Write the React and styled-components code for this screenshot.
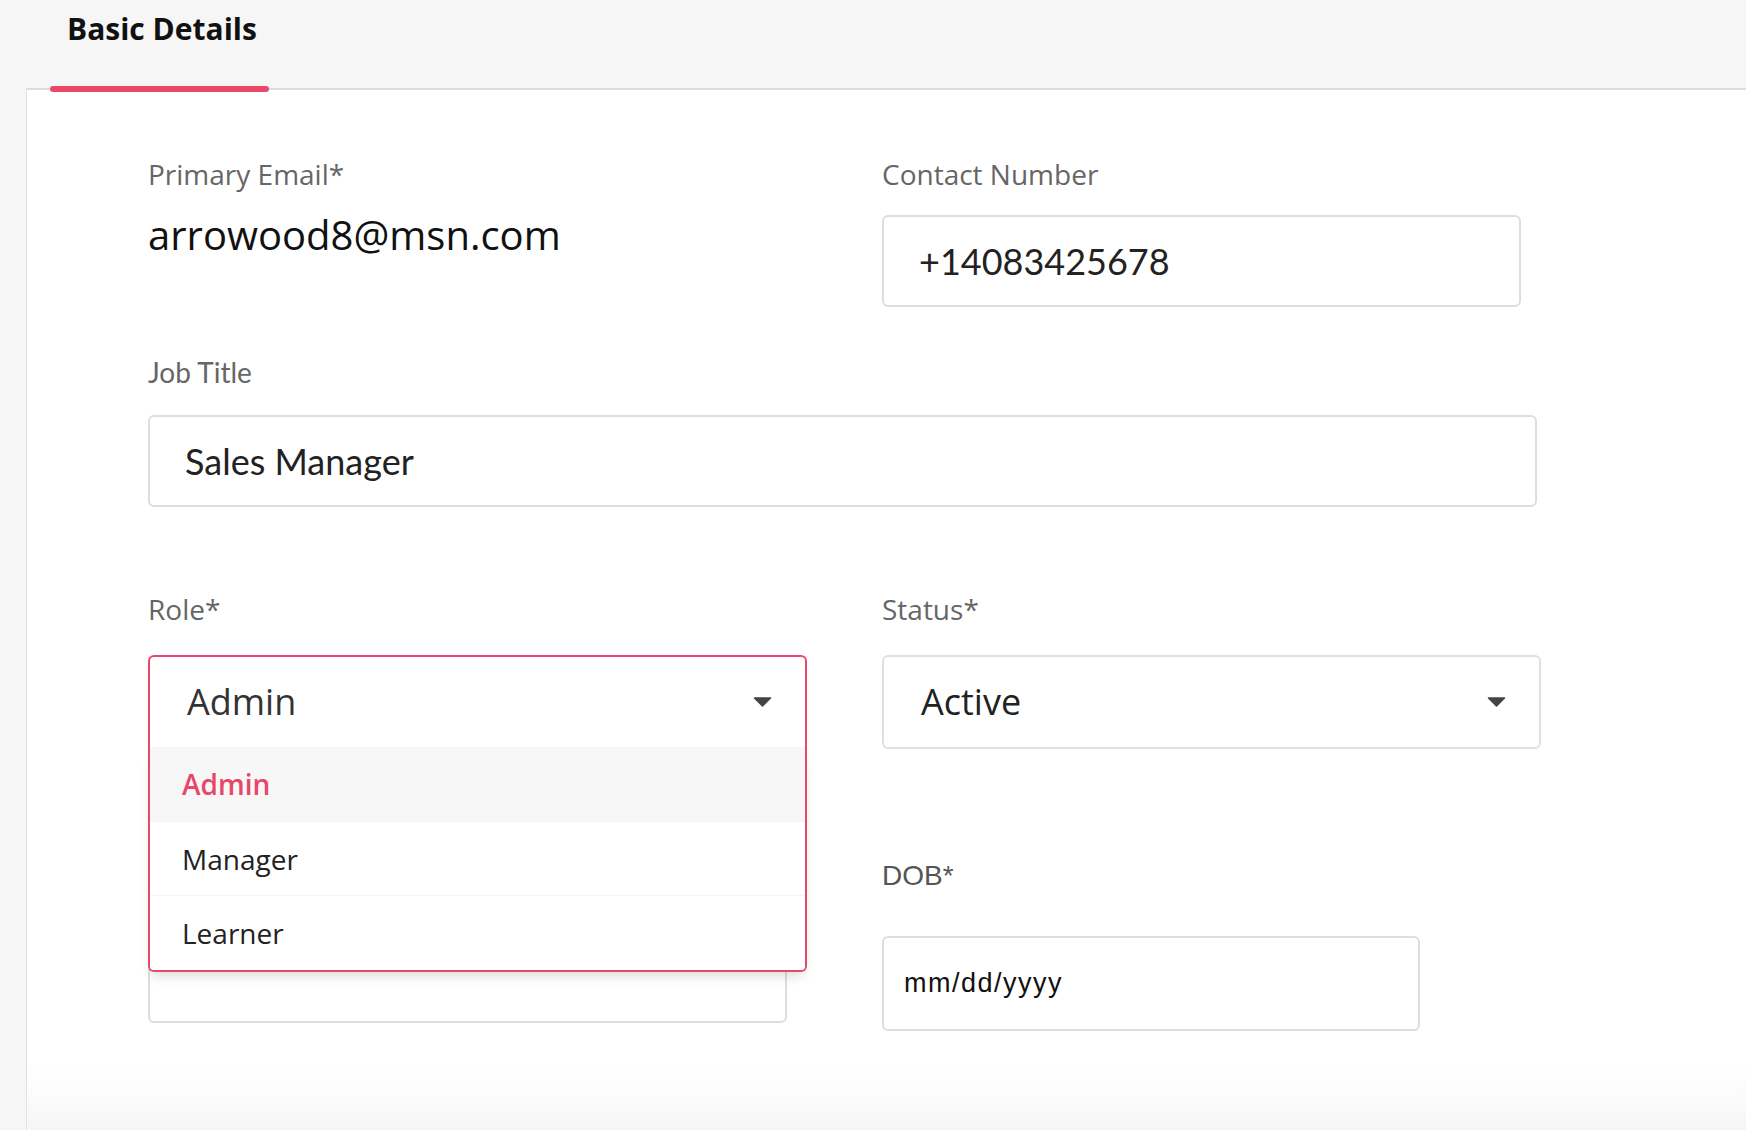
import React from 'react'
import styled, { createGlobalStyle } from 'styled-components';

const GlobalStyle = createGlobalStyle`
    body {
        margin: 0;
        background: #f6f6f6;
        font-family: "Open Sans", "Liberation Sans", sans-serif;
    }
`

const Page = styled.div`
    min-height: 1130px;
    display: flex;
    flex-direction: column;
    padding-left: 26px;
    box-sizing: border-box;
`

const TabBar = styled.div`
    height: 88px;
    display: flex;
    padding-left: 24px;
`

const Tab = styled.div`
    position: relative;
    width: 219px;
    box-sizing: border-box;
    padding: 14px 0 0 17px;
    font-size: 30px;
    line-height: 30px;
    font-weight: 700;
    color: #111;

    &::after {
        content: '';
        display: ${props => props.$active ? 'block' : 'none'};
        position: absolute;
        left: 0;
        right: 0;
        bottom: -4px;
        height: 6px;
        border-radius: 3px;
        background: #ec4669;
        z-index: 2;
    }
`

const Card = styled.div`
    flex: 1;
    background: #fff;
    border-top: 2px solid #dcdcdc;
    border-left: 1px solid #e2e2e2;
    padding: 70px 0 0 121px;
    box-shadow: inset 0 -80px 60px -60px rgba(0, 0, 0, 0.05);
`

const Form = styled.div`
    display: grid;
    grid-template-columns: 659px 659px;
    column-gap: 75px;
    align-items: start;
`

const Field = styled.div`
    position: relative;
    margin-top: ${props => props.$mt || 0}px;
    grid-column: ${props => props.$wide ? '1 / span 2' : 'auto'};
    z-index: ${props => props.$raised ? 5 : 1};
`

const Label = styled.div`
    font-size: 28px;
    line-height: 28px;
    color: #666;
    margin-bottom: ${props => props.$gap}px;
`

const LatoLabel = styled(Label)`
    font-family: Lato, "Open Sans", sans-serif;
    font-size: 28px;
    line-height: 28px;
`

const PlainLabel = styled(Label)`
    font-family: "Liberation Sans", Arial, sans-serif;
    color: #555;
`

const StaticValue = styled.div`
    font-size: 40px;
    line-height: 40px;
    color: #111;
`

const Box = styled.div`
    box-sizing: border-box;
    width: ${props => props.$w}px;
    height: ${props => props.$h || 92}px;
    border: 2px solid #dedede;
    border-radius: 6px;
    background: #fff;
    display: flex;
    align-items: center;
    padding-left: 35px;
    font-family: Lato, "Open Sans", sans-serif;
    font-size: 36px;
    color: #222;
`

const DateBox = styled(Box)`
    padding-left: 20px;
    font-family: "Liberation Sans", Arial, sans-serif;
    font-size: 27px;
    letter-spacing: 1.5px;
    color: #111;
`

const SelectBox = styled.div`
    box-sizing: border-box;
    height: ${props => props.$open ? 92 : 94}px;
    border: 2px solid ${props => props.$open ? '#e9476a' : '#e0e0e0'};
    border-bottom-width: ${props => props.$open ? 0 : 2}px;
    border-radius: ${props => props.$open ? '6px 6px 0 0' : '6px'};
    background: #fff;
    display: flex;
    align-items: center;
    justify-content: space-between;
    padding: 0 33px 0 37px;
    font-size: 36px;
    line-height: 36px;
    color: ${props => props.$open ? '#333' : '#222'};
`

const Caret = styled.svg`
    width: 19px;
    height: 10px;
    display: block;
`

const Menu = styled.div`
    position: absolute;
    left: 0;
    right: 0;
    top: 152px;
    background: #fff;
    border: 2px solid #e9476a;
    border-top: none;
    border-radius: 0 0 6px 6px;
    box-shadow: 0 8px 12px -4px rgba(0, 0, 0, 0.14);
    overflow: hidden;
`

const Option = styled.div`
    height: ${props => props.$h}px;
    display: flex;
    align-items: center;
    padding-left: 32px;
    font-size: 28px;
    font-weight: ${props => props.$selected ? 600 : 400};
    color: ${props => props.$selected ? '#e9476a' : '#222'};
    background: ${props => props.$selected ? '#f7f7f7' : '#fff'};
    border-bottom: 1px solid ${props => props.$last ? 'transparent' : '#f4f4f4'};
`

const ArrowDown = () => (
    <Caret viewBox="0 0 19 10">
        <path d="M1.5 1 H17.5 L9.5 9 Z" fill="#444" stroke="#444" strokeWidth="1.5" strokeLinejoin="round" />
    </Caret>
)

const roles = ['Admin', 'Manager', 'Learner']

const App = () => {
    return (
        <Page>
            <GlobalStyle />
            <TabBar>
                <Tab $active>Basic Details</Tab>
            </TabBar>
            <Card>
                <Form>
                    <Field>
                        <Label $gap={27}>Primary Email*</Label>
                        <StaticValue>arrowood8@msn.com</StaticValue>
                    </Field>
                    <Field>
                        <Label $gap={27}>Contact Number</Label>
                        <Box $w={639}>+14083425678</Box>
                    </Field>

                    <Field $wide $mt={51}>
                        <LatoLabel $gap={29}>Job Title</LatoLabel>
                        <Box $w={1389}>Sales Manager</Box>
                    </Field>

                    <Field $mt={88} $raised>
                        <Label $gap={32}>Role*</Label>
                        <SelectBox $open>
                            <span>Admin</span>
                            <ArrowDown />
                        </SelectBox>
                        <Menu>
                            {roles.map((r, i) => (
                                <Option key={r} $selected={i === 0} $last={i === roles.length - 1} $h={i === 0 ? 74 : 73}>{r}</Option>
                            ))}
                        </Menu>
                    </Field>
                    <Field $mt={88}>
                        <Label $gap={32}>Status*</Label>
                        <SelectBox>
                            <span>Active</span>
                            <ArrowDown />
                        </SelectBox>
                    </Field>

                    <Field $mt={179}>
                        <Box $w={639} $h={95} />
                    </Field>
                    <Field $mt={113}>
                        <PlainLabel $gap={46}>DOB*</PlainLabel>
                        <DateBox $w={538} $h={95}>mm/dd/yyyy</DateBox>
                    </Field>
                </Form>
            </Card>
        </Page>
    )
}

export default App
